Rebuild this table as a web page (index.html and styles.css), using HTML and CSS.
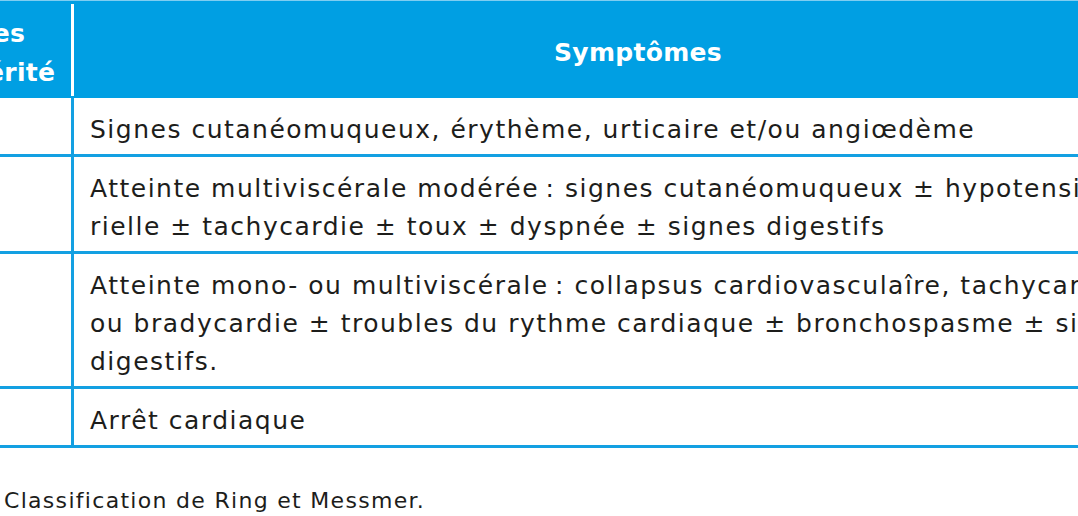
FILE: index.html
```html
<!DOCTYPE html>
<html lang="fr">
<head>
<meta charset="utf-8">
<title>Classification de Ring et Messmer</title>
<link rel="stylesheet" href="styles.css">
</head>
<body>
<div class="page">
  <div class="table">
    <div class="row head">
      <div class="cell grade">Grades<br>de sévérité</div>
      <div class="divider"></div>
      <div class="cell sym">Symptômes</div>
    </div>
    <div class="row">
      <div class="cell grade">I</div>
      <div class="divider"></div>
      <div class="cell text">Signes cutanéomuqueux, érythème, urticaire et/ou angiœdème</div>
    </div>
    <div class="row">
      <div class="cell grade">II</div>
      <div class="divider"></div>
      <div class="cell text">Atteinte multiviscérale modérée&#8239;: signes cutanéomuqueux ± hypotension arté-<br>rielle ± tachycardie ± toux ± dyspnée ± signes digestifs</div>
    </div>
    <div class="row">
      <div class="cell grade">III</div>
      <div class="divider"></div>
      <div class="cell text">Atteinte mono- ou multiviscérale&#8239;: collapsus cardiovasculaîre, tachycardie<br>ou bradycardie ± troubles du rythme cardiaque ± bronchospasme ± signes<br>digestifs.</div>
    </div>
    <div class="row">
      <div class="cell grade">IV</div>
      <div class="divider"></div>
      <div class="cell text">Arrêt cardiaque</div>
    </div>
  </div>
  <p class="caption">Classification de Ring et Messmer.</p>
</div>
</body>
</html>
```
FILE: styles.css
```css
html, body {
  margin: 0;
  padding: 0;
  overflow: hidden;
  background: #ffffff;
}

.page {
  width: 1078px;
  height: 516px;
  overflow: hidden;
  font-family: "DejaVu Sans", "Liberation Sans", sans-serif;
  color: #1d1d1b;
}

.table {
  width: 1308px;
  margin-left: -106px;
}

.row {
  display: grid;
  grid-template-columns: 177px 3px 1128px;
  border-bottom: 3px solid #13a0e2;
}

.row .divider {
  background: #13a0e2;
}

.head {
  background: #009fe3;
  border-top: 1px solid #7fcdf1;
  border-bottom: 0;
  grid-template-rows: 97px;
  color: #ffffff;
  font-weight: 700;
}

.head .divider {
  background: #ffffff;
  margin: 3px 0 2px;
}

.cell {
  font-size: 25px;
  line-height: 38px;
  letter-spacing: 1.5px;
}

.head .cell {
  display: flex;
  align-items: center;
  justify-content: center;
  text-align: center;
  line-height: 39px;
  letter-spacing: 0.3px;
  padding-top: 5px;
}

.head .grade {
  color: #ffffff;
  white-space: nowrap;
  padding: 7px 16px 0 0;
}

.grade {
  text-align: center;
  padding: 9px 0;
  color: transparent;
}

.text {
  padding: 13px 15px 5px 16px;
  white-space: nowrap;
}

.caption {
  margin: 40px 0 0 4px;
  font-size: 22px;
  line-height: 26px;
  letter-spacing: 1.3px;
}
```
